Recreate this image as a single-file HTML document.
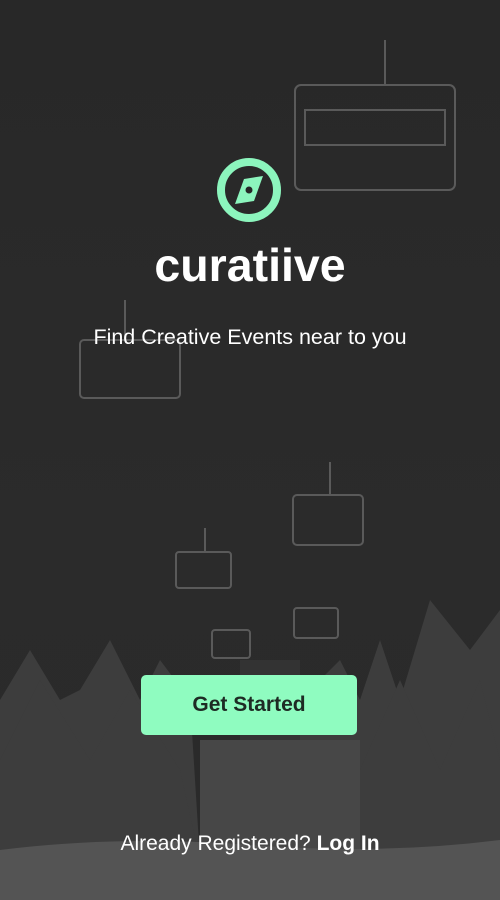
<!DOCTYPE html>
<html><head><meta charset="utf-8"><style>
html,body{margin:0;padding:0;}
body{width:500px;height:900px;overflow:hidden;position:relative;background:#262626;font-family:"Liberation Sans",sans-serif;}
.bg{position:absolute;left:0;top:0;}
.t{position:absolute;left:0;width:500px;text-align:center;color:#fff;}
.btn{position:absolute;left:141px;top:675px;width:216px;height:60px;background:#8ffcc0;border-radius:5px;color:#1e2b24;font-weight:bold;font-size:21px;line-height:60px;text-align:center;}
</style></head><body>
<svg class="bg" width="500" height="900" viewBox="0 0 500 900">
<defs>
<linearGradient id="g" x1="0" y1="0" x2="0" y2="1">
<stop offset="0" stop-color="#282828"/><stop offset="0.6" stop-color="#2b2b2b"/><stop offset="1" stop-color="#2a2a2a"/></linearGradient>
</defs>
<rect width="500" height="900" fill="url(#g)"/>
<g fill="none" stroke="#5a5a5a" stroke-width="2">
<rect x="295" y="85" width="160" height="105" rx="6"/><rect x="305" y="110" width="140" height="35"/><line x1="385" y1="40" x2="385" y2="85"/>
<rect x="80" y="340" width="100" height="58" rx="4"/><line x1="125" y1="300" x2="125" y2="340"/>
<rect x="293" y="495" width="70" height="50" rx="4"/><line x1="330" y1="462" x2="330" y2="495"/>
<rect x="176" y="552" width="55" height="36" rx="3"/><line x1="205" y1="528" x2="205" y2="552"/>
<rect x="294" y="608" width="44" height="30" rx="3"/><rect x="212" y="630" width="38" height="28" rx="3"/>
</g>
<g fill="#3d3d3d">
<polygon points="0,700 30,650 60,700 80,690 110,640 140,700 160,660 190,700 200,860 0,860"/>
<polygon points="300,700 340,660 360,700 380,640 400,700 430,600 470,650 500,610 500,860 300,860"/>
<polygon points="0,760 40,680 90,760 130,690 180,770 200,860 0,860"/>
<polygon points="360,770 400,680 440,770 480,680 500,760 500,860 360,860"/>
</g>
<rect x="200" y="740" width="160" height="110" fill="#474747"/>
<rect x="240" y="660" width="60" height="80" fill="#333"/>
<path d="M0,850 Q120,835 250,845 T500,840 L500,900 L0,900Z" fill="#545454"/>
<circle cx="249" cy="190" r="28" fill="none" stroke="#8cf5bd" stroke-width="8"/>
<path d="M263,176 L254,201 L235,204 L244,179 Z" fill="#8cf5bd"/>
<circle cx="249" cy="190" r="3.5" fill="#262626"/>
</svg>
<div class="t" style="top:238px;font-size:46.5px;font-weight:bold;">curatiive</div>
<div class="t" style="top:325px;font-size:21.5px;">Find Creative Events near to you</div>
<div class="btn">Get Started</div>
<div class="t" style="top:832px;font-size:21px;">Already Registered? <b>Log In</b></div>
</body></html>
